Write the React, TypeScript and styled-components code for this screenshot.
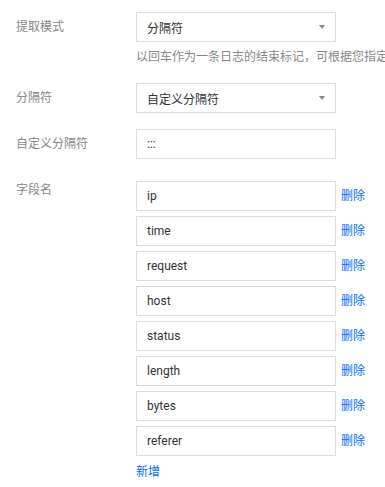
import React from "react";
import styled, { createGlobalStyle } from "styled-components";

const GlobalStyle = createGlobalStyle`
  html, body {
    margin: 0;
    padding: 0;
    background: #ffffff;
  }
  body {
    font-family: Roboto, "Noto Sans CJK SC", "Noto Sans", sans-serif;
    font-size: 12px;
    color: #333;
    overflow: hidden;
  }
`;

const Form = styled.div`
  padding: 12px 0 0 16px;
  width: 369px;
  overflow: hidden;
`;

const Item = styled.div<{ $gap?: number }>`
  display: flex;
  align-items: flex-start;
  margin-bottom: ${(p) => (p.$gap ?? 16)}px;
`;

const Label = styled.div`
  flex: 0 0 120px;
  line-height: 30px;
  font-size: 12px;
  color: #888;
`;

const Control = styled.div<{ $padTop?: number }>`
  flex: 1;
  min-width: 0;
  padding-top: ${(p) => p.$padTop ?? 0}px;
`;

const Box = styled.div`
  box-sizing: border-box;
  width: 200px;
  height: 30px;
  border: 1px solid #dddddd;
  background: #fff;
  padding: 0 10px;
  display: flex;
  align-items: center;
  font-size: 12px;
  color: #333;
`;

const SelectBox = styled(Box)`
  justify-content: space-between;
`;

const Caret = styled.span`
  width: 0;
  height: 0;
  border-left: 3.5px solid transparent;
  border-right: 3.5px solid transparent;
  border-top: 4px solid #888;
`;

const Help = styled.div`
  margin-top: 7px;
  margin-bottom: 2px;
  line-height: 16px;
  font-size: 12px;
  color: #888;
  white-space: nowrap;
`;

const FieldList = styled.div`
  display: flex;
  flex-direction: column;
  gap: 5px;
`;

const FieldRow = styled.div`
  display: flex;
  align-items: center;
`;

const Link = styled.a`
  font-size: 12px;
  color: #006eff;
  text-decoration: none;
  cursor: pointer;
  line-height: 16px;
`;

const DeleteLink = styled(Link)`
  margin-left: 5px;
`;

const AddLink = styled(Link)`
  display: inline-block;
  margin-top: 8px;
`;

const Select: React.FC<{ value: string }> = ({ value }) => (
  <SelectBox>
    <span>{value}</span>
    <Caret />
  </SelectBox>
);

const fields = ["ip", "time", "request", "host", "status", "length", "bytes", "referer"];

export default function App() {
  return (
    <>
      <GlobalStyle />
      <Form>
        <Item>
          <Label>提取模式</Label>
          <Control>
            <Select value="分隔符" />
            <Help>以回车作为一条日志的结束标记，可根据您指定的分隔符将每条日志分隔为多个字段</Help>
          </Control>
        </Item>
        <Item>
          <Label>分隔符</Label>
          <Control>
            <Select value="自定义分隔符" />
          </Control>
        </Item>
        <Item>
          <Label>自定义分隔符</Label>
          <Control>
            <Box>:::</Box>
          </Control>
        </Item>
        <Item $gap={0}>
          <Label>字段名</Label>
          <Control $padTop={6}>
            <FieldList>
              {fields.map((f) => (
                <FieldRow key={f}>
                  <Box>{f}</Box>
                  <DeleteLink>删除</DeleteLink>
                </FieldRow>
              ))}
            </FieldList>
            <AddLink>新增</AddLink>
          </Control>
        </Item>
      </Form>
    </>
  );
}
